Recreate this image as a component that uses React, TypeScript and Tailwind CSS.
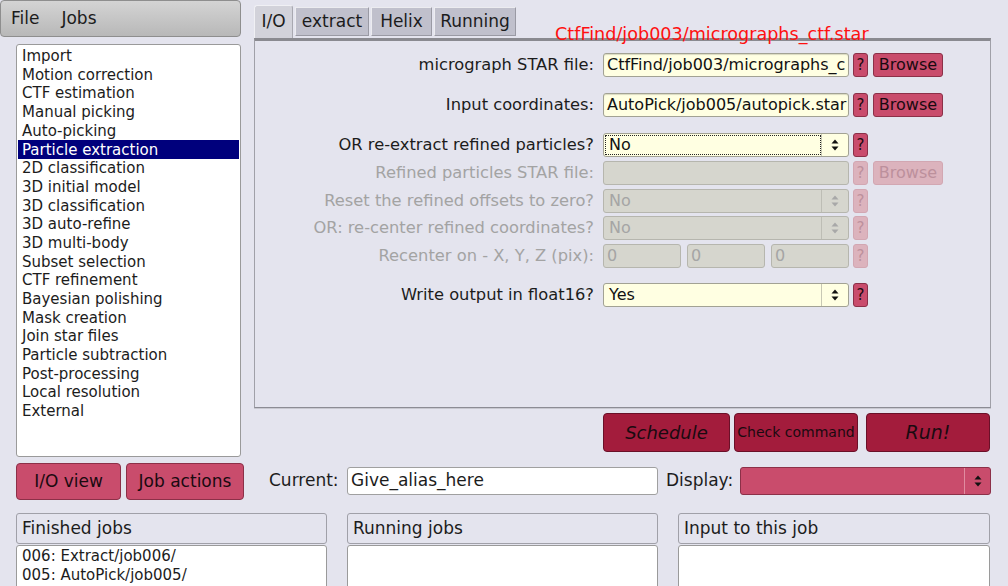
import React from "react";

const jobs = [
  "Import",
  "Motion correction",
  "CTF estimation",
  "Manual picking",
  "Auto-picking",
  "Particle extraction",
  "2D classification",
  "3D initial model",
  "3D classification",
  "3D auto-refine",
  "3D multi-body",
  "Subset selection",
  "CTF refinement",
  "Bayesian polishing",
  "Mask creation",
  "Join star files",
  "Particle subtraction",
  "Post-processing",
  "Local resolution",
  "External",
];

function Spin({ dim }: { dim?: boolean }) {
  return (
    <svg width="10" height="14" viewBox="0 0 10 14">
      <path d="M5 1.5 L8.5 5.5 H1.5 Z M5 12.5 L8.5 8.5 H1.5 Z" fill={dim ? "#a8a8a8" : "#111"} />
    </svg>
  );
}

function Help({ dim }: { dim?: boolean }) {
  return dim ? (
    <div className="ml-[4px] flex h-[24px] w-[15px] items-center justify-center rounded-[3px] border border-[#d2a7b2] bg-[#dcb3bd] text-[15px] text-[#bc909c]">
      ?
    </div>
  ) : (
    <div className="ml-[4px] flex h-[24px] w-[15px] items-center justify-center rounded-[3px] border border-[#8c3048] bg-[#c94c6c] text-[15px] text-[#1a0a10]">
      ?
    </div>
  );
}

function Browse({ dim }: { dim?: boolean }) {
  return dim ? (
    <div className="ml-[5px] flex h-[24px] w-[70px] items-center justify-center rounded-[3px] border border-[#d2a7b2] bg-[#dcb3bd] text-[16px] text-[#bc909c]">
      Browse
    </div>
  ) : (
    <div className="ml-[5px] flex h-[24px] w-[70px] items-center justify-center rounded-[3px] border border-[#8c3048] bg-[#c94c6c] text-[16px] text-[#1a0a10]">
      Browse
    </div>
  );
}

function Label({ text, dim }: { text: string; dim?: boolean }) {
  return (
    <div
      className={
        "w-[348px] shrink-0 pr-[9px] text-right text-[16.3px] whitespace-nowrap " +
        (dim ? "text-[#a3a3a3]" : "text-[#1c1c1c]")
      }
    >
      {text}
    </div>
  );
}

function TextIn({ value, dim, w = "w-[246px]" }: { value: string; dim?: boolean; w?: string }) {
  return (
    <div
      className={
        w +
        " flex h-[24px] shrink-0 items-center overflow-hidden whitespace-nowrap rounded-[3px] border pl-[3px] text-[16px] " +
        (dim
          ? "border-[#b6b6ae] bg-[#d6d6ce] text-[#a5a5a5]"
          : "border-[#a2a294] bg-[#ffffe2] text-[#111] shadow-[inset_0_1px_1px_rgba(0,0,0,0.15)]")
      }
    >
      {value}
    </div>
  );
}

function Choice({ value, dim, focus }: { value: string; dim?: boolean; focus?: boolean }) {
  return (
    <div
      className={
        "relative flex h-[24px] w-[246px] shrink-0 items-center rounded-[3px] border text-[16px] " +
        (dim
          ? "border-[#b6b6ae] bg-[#d6d6ce] text-[#a5a5a5]"
          : "border-[#a2a294] bg-[#ffffe2] text-[#111]")
      }
    >
      <div className="flex h-full flex-1 items-center pl-[5px]">{value}</div>
      <div
        className={
          "flex h-full w-[27px] items-center justify-center border-l " +
          (dim ? "border-l-[#bdbdb5]" : "border-l-[#c8c8b4]")
        }
      >
        <Spin dim={dim} />
      </div>
      {focus && (
        <div className="pointer-events-none absolute left-[1px] top-[1px] h-[20px] w-[216px] border border-dotted border-[#222]" />
      )}
    </div>
  );
}

export default function App() {
  return (
    <div className="relative h-[586px] w-[1008px] overflow-hidden bg-[#e4e4ee] font-['DejaVu_Sans',sans-serif] text-[#1c1c1c]">
      <div className="flex h-[513px]">
        {/* left column */}
        <div className="flex w-[254px] shrink-0 flex-col">
          <div className="flex h-[37px] w-[241px] items-center gap-[22px] rounded-[4px] border border-[#8e8e8e] bg-gradient-to-b from-[#d4d4d4] to-[#b8b8b8] pl-[10px] text-[17px] text-[#1c1c1c]">
            <span>File</span>
            <span>Jobs</span>
          </div>
          <div className="ml-[16px] mt-[7px] h-[413px] w-[225px] rounded-[3px] border border-[#9a9a9a] bg-white pl-[1px] pr-[1px] pt-[2px]">
            {jobs.map((j) => (
              <div
                key={j}
                className={
                  "flex h-[18.7px] items-center pl-[4px] text-[15px] whitespace-nowrap " +
                  (j === "Particle extraction" ? "bg-[#00007c] text-white" : "text-[#1c1c1c]")
                }
              >
                {j}
              </div>
            ))}
          </div>
          <div className="ml-[16px] mt-[6px] flex gap-[5px]">
            <div className="flex h-[37px] w-[105px] items-center justify-center rounded-[4px] border border-[#8c3048] bg-[#c94c6c] text-[17px] text-[#1a0a10]">
              I/O view
            </div>
            <div className="flex h-[37px] w-[118px] items-center justify-center rounded-[4px] border border-[#8c3048] bg-[#c94c6c] text-[17px] text-[#1a0a10]">
              Job actions
            </div>
          </div>
        </div>

        {/* right column */}
        <div className="flex w-[737px] shrink-0 flex-col">
          {/* tabs */}
          <div className="flex h-[38px] items-end gap-[2px] pt-[5px]">
            <div className="flex h-[33px] w-[39px] items-center justify-center rounded-t-[3px] border border-b-0 border-[#a8a8b0] border-l-[#f0f0f4] border-t-[#f0f0f4] bg-[#d2d2da] text-[17px]">
              I/O
            </div>
            <div className="mb-[2px] flex h-[29px] w-[74px] items-center justify-center border border-[#9a9aa4] border-l-[#ececf0] border-t-[#ececf0] bg-[#c0c0cc] text-[17px]">
              extract
            </div>
            <div className="mb-[2px] flex h-[29px] w-[61px] items-center justify-center border border-[#9a9aa4] border-l-[#ececf0] border-t-[#ececf0] bg-[#c0c0cc] text-[17px]">
              Helix
            </div>
            <div className="mb-[2px] flex h-[29px] w-[82px] items-center justify-center border border-[#9a9aa4] border-l-[#ececf0] border-t-[#ececf0] bg-[#c0c0cc] text-[17px]">
              Running
            </div>
          </div>
          {/* panel */}
          <div className="flex h-[370px] flex-col border border-[#a0a0a8] border-t-[3px] border-t-[#8a8a90] border-b-[#8c8c94] pt-[12px] shadow-[0_1px_0_#c8c8d0]">
            <div className="flex h-[24px] items-center">
              <Label text="micrograph STAR file:" />
              <TextIn value="CtfFind/job003/micrographs_c" />
              <Help />
              <Browse />
            </div>
            <div className="mt-[16px] flex h-[24px] items-center">
              <Label text="Input coordinates:" />
              <TextIn value="AutoPick/job005/autopick.star" />
              <Help />
              <Browse />
            </div>
            <div className="mt-[16px] flex h-[24px] items-center">
              <Label text="OR re-extract refined particles?" />
              <Choice value="No" focus />
              <Help />
            </div>
            <div className="mt-[4px] flex h-[24px] items-center">
              <Label text="Refined particles STAR file:" dim />
              <TextIn value="" dim />
              <Help dim />
              <Browse dim />
            </div>
            <div className="mt-[4px] flex h-[24px] items-center">
              <Label text="Reset the refined offsets to zero?" dim />
              <Choice value="No" dim />
              <Help dim />
            </div>
            <div className="mt-[3px] flex h-[24px] items-center">
              <Label text="OR: re-center refined coordinates?" dim />
              <Choice value="No" dim />
              <Help dim />
            </div>
            <div className="mt-[4px] flex h-[24px] items-center">
              <Label text="Recenter on - X, Y, Z (pix):" dim />
              <div className="flex w-[246px] shrink-0 gap-[6px]">
                <TextIn value="0" dim w="w-[78px]" />
                <TextIn value="0" dim w="w-[78px]" />
                <TextIn value="0" dim w="w-[78px]" />
              </div>
              <Help dim />
            </div>
            <div className="mt-[15px] flex h-[24px] items-center">
              <Label text="Write output in float16?" />
              <Choice value="Yes" />
              <Help />
            </div>
          </div>
          {/* run buttons */}
          <div className="mt-[5px] flex h-[39px] justify-end pr-[1px]">
            <div className="flex w-[127px] items-center justify-center rounded-[4px] border border-[#6a1028] bg-[#a31c3c] text-[18px] italic text-[#1a0a10]">
              Schedule
            </div>
            <div className="ml-[4px] flex w-[124px] items-center justify-center rounded-[4px] border border-[#6a1028] bg-[#a31c3c] text-[14px] text-[#1a0a10]">
              Check command
            </div>
            <div className="ml-[8px] flex w-[124px] items-center justify-center rounded-[4px] border border-[#6a1028] bg-[#a31c3c] text-[19px] italic text-[#1a0a10]">
              Run!
            </div>
          </div>
          {/* current row */}
          <div className="mt-[15px] flex h-[28px] items-center">
            <div className="w-[93px] pl-[15px] text-[17px]">Current:</div>
            <div className="flex h-[28px] w-[311px] items-center rounded-[3px] border border-[#a0a0a0] bg-white pl-[3px] text-[17px]">
              Give_alias_here
            </div>
            <div className="w-[82px] pl-[8px] text-[17px]">Display:</div>
            <div className="flex h-[28px] w-[251px] items-center justify-end rounded-[3px] border border-[#8c3048] bg-[#c94c6c]">
              <div className="flex h-full w-[26px] items-center justify-center border-l border-l-[#e08ca0]">
                <Spin />
              </div>
            </div>
          </div>
        </div>
      </div>

      {/* bottom job lists */}
      <div className="ml-[16px] flex w-[975px] gap-[20px]">
        {[
          { t: "Finished jobs", items: ["006: Extract/job006/", "005: AutoPick/job005/"] },
          { t: "Running jobs", items: [] as string[] },
          { t: "Input to this job", items: [] as string[] },
        ].map((c, i) => (
          <div key={c.t} className={(i === 2 ? "w-[312px]" : "w-[311px]") + " flex shrink-0 flex-col"}>
            <div className="flex h-[31px] items-center rounded-[3px] border border-[#a0a0a8] bg-[#e4e4ee] pl-[5px] text-[17px]">
              {c.t}
            </div>
            <div className="mt-[1px] h-[60px] rounded-[3px] border border-[#9a9a9a] bg-white pl-[5px] pt-[1px]">
              {c.items.map((it) => (
                <div key={it} className="h-[18.7px] text-[15px] leading-[18.7px] whitespace-nowrap">
                  {it}
                </div>
              ))}
            </div>
          </div>
        ))}
      </div>

      {/* tooltip-like red path text */}
      <div className="absolute left-[555px] top-[23px] text-[17.6px] leading-[22px] whitespace-nowrap text-[#ff1010]">
        CtfFind/job003/micrographs_ctf.star
      </div>
    </div>
  );
}
